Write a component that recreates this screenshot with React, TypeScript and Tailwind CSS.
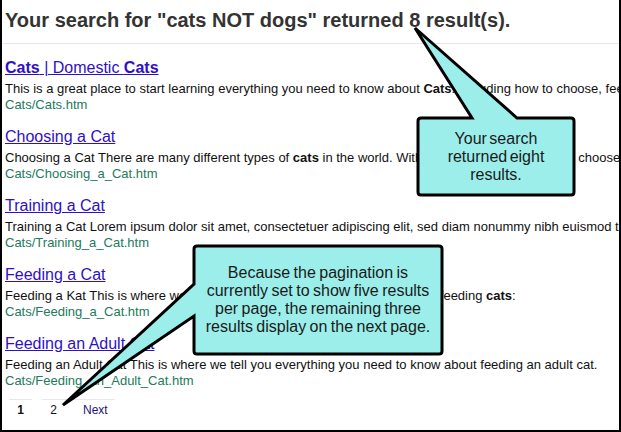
import React from 'react';

type Result = {
  title: React.ReactNode;
  desc: React.ReactNode;
  url: string;
};

const results: Result[] = [
  {
    title: (
      <>
        <b>Cats</b> | Domestic <b>Cats</b>
      </>
    ),
    desc: (
      <>
        This is a great place to start learning everything you need to know about <b>Cats</b>. Including how to
        choose, feed, train and care for your new friend.
      </>
    ),
    url: 'Cats/Cats.htm',
  },
  {
    title: 'Choosing a Cat',
    desc: (
      <>
        Choosing a Cat There are many different types of <b>cats</b> in the world. With so many breeds, how do I
        choose from them all?
      </>
    ),
    url: 'Cats/Choosing_a_Cat.htm',
  },
  {
    title: 'Training a Cat',
    desc: 'Training a Cat Lorem ipsum dolor sit amet, consectetuer adipiscing elit, sed diam nonummy nibh euismod tincidunt ut laoreet.',
    url: 'Cats/Training_a_Cat.htm',
  },
  {
    title: 'Feeding a Cat',
    desc: (
      <>
        Feeding a Kat This is where we tell you everything you need to know about feeding <b>cats</b>:
      </>
    ),
    url: 'Cats/Feeding_a_Cat.htm',
  },
  {
    title: 'Feeding an Adult Cat',
    desc: 'Feeding an Adult Cat This is where we tell you everything you need to know about feeding an adult cat.',
    url: 'Cats/Feeding_an_Adult_Cat.htm',
  },
];

const Callouts: React.FC = () => {
  return (
    <>
      <svg className="absolute left-0 top-0 pointer-events-none" width={621} height={432} viewBox="0 0 621 432">
        <path
          d="M421 118 H472 L415 28 L517 118 H571 Q574 118 574 121 V192 Q574 195 571 195 H421 Q418 195 418 192 V121 Q418 118 421 118 Z"
          fill="#9beeea"
          stroke="#000"
          strokeWidth={3}
          strokeLinejoin="miter"
        />
        <path
          d="M197 246 H439 Q442 246 442 249 V351 Q442 354 439 354 H197 Q194 354 194 351 V316 L63 405 L194 284 V249 Q194 246 197 246 Z"
          fill="#9beeea"
          stroke="#000"
          strokeWidth={3}
          strokeLinejoin="miter"
        />
      </svg>
      <div className="absolute left-[418px] top-[118px] w-[156px] h-[77px] flex items-center justify-center text-center text-[16px] leading-[18px] text-[#1a1a1a] [word-spacing:-2px]">
        Your search
        <br />
        returned eight
        <br />
        results.
      </div>
      <div className="absolute left-[194px] top-[246px] w-[248px] h-[108px] flex items-center justify-center text-center text-[16px] leading-[18px] text-[#1a1a1a] [word-spacing:-1px]">
        Because the pagination is
        <br />
        currently set to show five results
        <br />
        per page, the remaining three
        <br />
        results display on the next page.
      </div>
    </>
  );
};

const App: React.FC = () => {
  return (
    <div className="relative w-[621px] h-[432px] overflow-hidden bg-white font-['Liberation_Sans',Arial,sans-serif]">
      <div className="w-full h-full border-l-2 border-r-2 border-b-2 border-black overflow-hidden">
        <div className="pl-[1px]">
          <h1 className="pl-[2px] pt-[8px] pb-[11px] border-b border-[#e6e6e6] text-[20px] leading-[24px] font-bold text-[#333] whitespace-nowrap">
            Your search for "cats NOT dogs" returned 8 result(s).
          </h1>
          <ul className="pl-[2px] mt-[13px] flex flex-col gap-[13px]">
            {results.map((r, i) => (
              <li key={i} className="whitespace-nowrap">
                <a href="#" className="block text-[16px] leading-[22px] text-[#2e10c8] underline">
                  {r.title}
                </a>
                <p className="mt-[2px] text-[13px] leading-[16px] text-[#111]">{r.desc}</p>
                <p className="text-[13px] leading-[16px] text-[#237a5c]">{r.url}</p>
              </li>
            ))}
          </ul>
          <div className="ml-[6px] mt-[10px] flex text-[12px] leading-[20px]">
            <span className="w-[23px] border-t border-[#e8e8e8] text-center font-bold text-[#111]">1</span>
            <span className="ml-[10px] w-[23px] border-t border-[#e8e8e8] text-center text-[#111]">2</span>
            <span className="w-[50px] border-t border-[#e8e8e8] pl-[18px] text-[#241470]">Next</span>
          </div>
        </div>
      </div>
      <Callouts />
    </div>
  );
};

export default App;
